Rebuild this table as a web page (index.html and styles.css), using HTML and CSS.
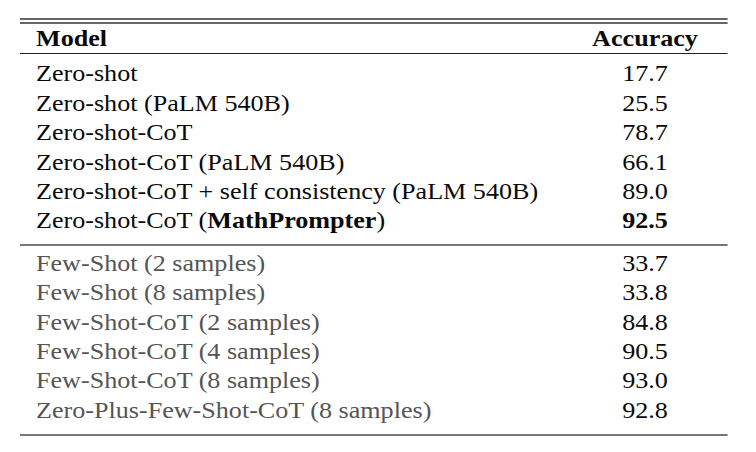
FILE: index.html
```html
<!DOCTYPE html>
<html>
<head>
<meta charset="utf-8">
<link rel="stylesheet" href="styles.css">
</head>
<body>
<div class="table">
  <div class="toprule"></div>
  <div class="row head"><span>Model</span><span class="num">Accuracy</span></div>
  <div class="group first">
    <div class="row"><span>Zero-shot</span><span class="num">17.7</span></div>
    <div class="row"><span>Zero-shot (PaLM 540B)</span><span class="num">25.5</span></div>
    <div class="row"><span>Zero-shot-CoT</span><span class="num">78.7</span></div>
    <div class="row"><span>Zero-shot-CoT (PaLM 540B)</span><span class="num">66.1</span></div>
    <div class="row"><span>Zero-shot-CoT + self consistency (PaLM 540B)</span><span class="num">89.0</span></div>
    <div class="row"><span>Zero-shot-CoT (<b>MathPrompter</b>)</span><span class="num"><b>92.5</b></span></div>
  </div>
  <div class="group second">
    <div class="row"><span class="muted">Few-Shot (2 samples)</span><span class="num">33.7</span></div>
    <div class="row"><span class="muted">Few-Shot (8 samples)</span><span class="num">33.8</span></div>
    <div class="row"><span class="muted">Few-Shot-CoT (2 samples)</span><span class="num">84.8</span></div>
    <div class="row"><span class="muted">Few-Shot-CoT (4 samples)</span><span class="num">90.5</span></div>
    <div class="row"><span class="muted">Few-Shot-CoT (8 samples)</span><span class="num">93.0</span></div>
    <div class="row"><span class="muted">Zero-Plus-Few-Shot-CoT (8 samples)</span><span class="num">92.8</span></div>
  </div>
</div>
</body>
</html>
```
FILE: styles.css
```css
html, body {
  margin: 0;
  background: #fff;
}
body {
  font-family: "Liberation Serif", "Times New Roman", serif;
  font-size: 22.5px;
  color: #0a0a0a;
}
.table {
  margin: 18px 0 0 20px;
  width: 609.5px;
  transform: scaleX(1.16);
  transform-origin: 0 0;
}
.toprule {
  height: 2px;
  border-top: 2px solid #666;
  border-bottom: 2px solid #666;
}
.row {
  display: grid;
  grid-template-columns: 1fr 92px;
  padding: 0 24.7px 0 13.8px;
  line-height: 29.4px;
  white-space: nowrap;
}
.head {
  font-weight: bold;
  border-bottom: 1px solid #222;
}
.num {
  text-align: center;
}
.group {
  border-bottom: 2px solid #777;
}
.group.first {
  padding: 5px 0 8px;
}
.group.second {
  padding: 3px 0 9px;
}
.muted {
  color: #555;
}
b {
  font-weight: bold;
}
```
